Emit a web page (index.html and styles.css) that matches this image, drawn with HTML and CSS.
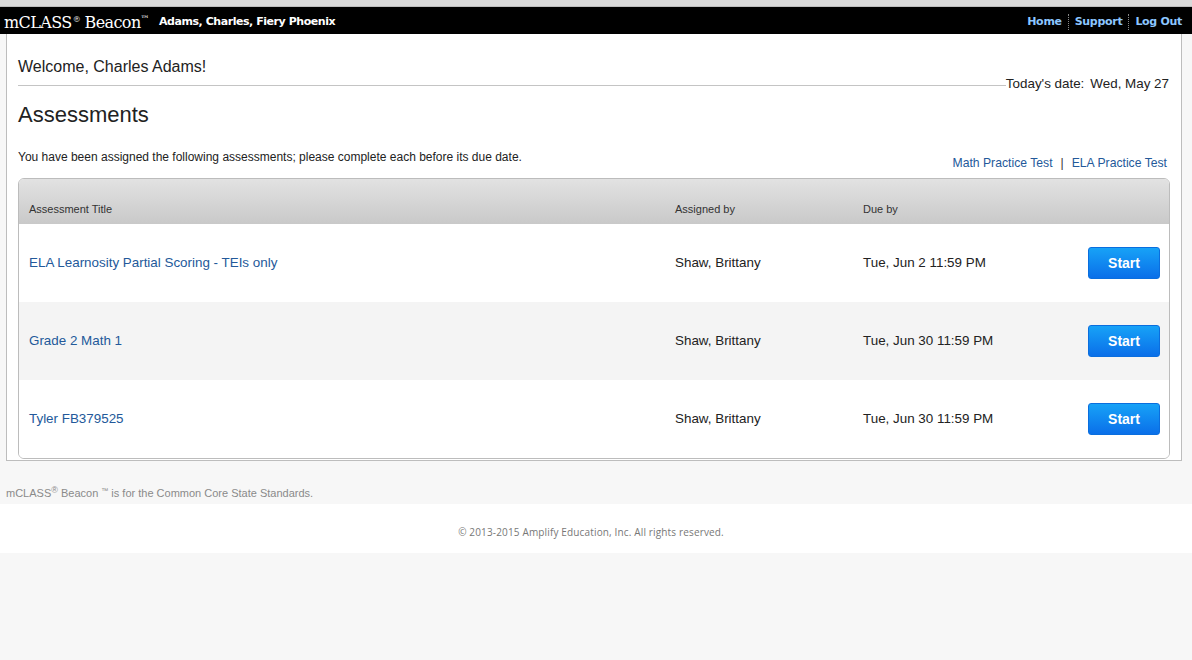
FILE: index.html
```html
<!DOCTYPE html>
<html>
<head>
<meta charset="utf-8">
<link rel="stylesheet" href="styles.css">
</head>
<body>
<div class="chrome"></div>
<header class="topbar">
  <div class="brand">
    <span class="logo">mCLASS<sup>®</sup> Beacon<sup class="tm">™</sup></span>
    <span class="user">Adams, Charles, Fiery Phoenix</span>
  </div>
  <nav class="toplinks">
    <a href="#">Home</a><span class="sep"></span><a href="#">Support</a><span class="sep"></span><a href="#">Log Out</a>
  </nav>
</header>
<main class="panel">
  <div class="welcome">Welcome, Charles Adams!</div>
  <div class="daterow">
    <div class="rule"></div>
    <div class="today"><span>Today's date:</span><span>Wed, May 27</span></div>
  </div>
  <h1 class="title">Assessments</h1>
  <div class="introrow">
    <p class="intro">You have been assigned the following assessments; please complete each before its due date.</p>
    <div class="practice"><a href="#">Math Practice Test</a><span class="bar">|</span><a href="#">ELA Practice Test</a></div>
  </div>
  <div class="table">
    <div class="thead row">
      <div class="c-title">Assessment Title</div>
      <div class="c-by">Assigned by</div>
      <div class="c-due">Due by</div>
      <div class="c-act"></div>
    </div>
    <div class="row body">
      <div class="c-title"><a href="#">ELA Learnosity Partial Scoring - TEIs only</a></div>
      <div class="c-by">Shaw, Brittany</div>
      <div class="c-due">Tue, Jun 2 11:59 PM</div>
      <div class="c-act"><button class="start">Start</button></div>
    </div>
    <div class="row body alt">
      <div class="c-title"><a href="#">Grade 2 Math 1</a></div>
      <div class="c-by">Shaw, Brittany</div>
      <div class="c-due">Tue, Jun 30 11:59 PM</div>
      <div class="c-act"><button class="start">Start</button></div>
    </div>
    <div class="row body">
      <div class="c-title"><a href="#">Tyler FB379525</a></div>
      <div class="c-by">Shaw, Brittany</div>
      <div class="c-due">Tue, Jun 30 11:59 PM</div>
      <div class="c-act"><button class="start">Start</button></div>
    </div>
  </div>
</main>
<div class="note">mCLASS<sup>®</sup> Beacon <sup class="tm2">™</sup> is for the Common Core State Standards.</div>
<footer class="copy">© 2013-2015 Amplify Education, Inc. All rights reserved.</footer>
</body>
</html>
```
FILE: styles.css
```css
html, body {
  margin: 0;
  padding: 0;
  background: #f7f7f7;
  font-family: "Liberation Sans", Arial, sans-serif;
  color: #222;
}
a { text-decoration: none; }

.chrome {
  height: 6px;
  background: #d9d9d9;
  border-bottom: 1px solid #bcbcbc;
}

.topbar {
  height: 27px;
  background: #000;
  display: flex;
  align-items: center;
  justify-content: space-between;
  padding: 0 10px 0 4px;
}
.brand { display: flex; align-items: center; }
.logo {
  font-family: "DejaVu Serif", "Liberation Serif", serif;
  color: #fff;
  font-size: 16px;
  letter-spacing: -0.6px;
  line-height: 27px;
}
.logo sup { font-size: 8px; vertical-align: 6px; margin-left: 1px; }
.logo sup.tm { font-size: 9px; vertical-align: 6px; margin-left: 0; }
.user {
  color: #fff;
  font-family: "DejaVu Sans", Verdana, sans-serif;
  font-weight: bold;
  font-size: 11px;
  letter-spacing: -0.45px;
  margin-left: 10px;
  margin-top: 2px;
}
.toplinks {
  display: flex;
  align-items: center;
  margin-top: 2px;
}
.toplinks a {
  color: #8cc6ff;
  font-family: "DejaVu Sans", Verdana, sans-serif;
  font-weight: bold;
  font-size: 11px;
  letter-spacing: -0.3px;
}
.toplinks .sep {
  width: 0;
  height: 16px;
  border-left: 1px dotted #888;
  margin: 0 6px;
}

.panel {
  margin-left: 6px;
  width: 1176px;
  background: #fff;
  border: 1px solid #bdbdbd;
  border-top: none;
  padding: 0 11px 0 11px;
  box-sizing: border-box;
  height: 427px;
}
.welcome {
  font-size: 16px;
  color: #222;
  padding-top: 23px;
  line-height: 20px;
}
.daterow {
  display: flex;
  align-items: flex-start;
  margin-top: 8px;
  height: 2px;
}
.rule {
  flex: 1;
  border-top: 1px solid #c4c4c4;
}
.today {
  display: flex;
  gap: 6px;
  font-size: 13.4px;
  line-height: 16px;
  margin-top: -9px;
  color: #222;
  margin-right: 1px;
}
.title {
  font-weight: normal;
  font-size: 22px;
  margin: 14px 0 0 0;
  line-height: 28px;
  color: #222;
}
.introrow {
  display: flex;
  justify-content: space-between;
  align-items: flex-start;
  margin-top: 21px;
}
.intro {
  margin: 0;
  font-size: 12px;
  line-height: 14px;
  color: #222;
}
.practice {
  font-size: 12.2px;
  line-height: 14px;
  margin-top: 6px;
  margin-right: 3px;
}
.practice a { color: #24599a; }
.practice .bar { color: #333; margin: 0 8px; }

.table {
  margin-top: 8px;
  width: 1152px;
  box-sizing: border-box;
  border: 1px solid #bcbcbc;
  border-radius: 6px;
  overflow: hidden;
}
.row {
  display: grid;
  grid-template-columns: 646px 188px 1fr 94px;
  align-items: center;
  padding-left: 10px;
}
.thead {
  height: 45px;
  background: linear-gradient(#e2e2e2, #c9c9c9);
  align-items: end;
  font-size: 11px;
  color: #333;
}
.thead > div { padding-bottom: 9px; }
.body {
  height: 78px;
  background: #fff;
  font-size: 13.4px;
  color: #222;
  padding-bottom: 1px;
  box-sizing: border-box;
}
.body.alt { background: #f4f4f4; }
.c-title a { color: #23599a; }
.c-act {
  display: flex;
  justify-content: flex-end;
  padding-right: 9px;
}
.start {
  width: 72px;
  height: 32px;
  border: 1px solid #0a6ede;
  border-radius: 3px;
  background: linear-gradient(#17a2f7, #0a6fe9);
  color: #fff;
  font-family: "Liberation Sans", Arial, sans-serif;
  font-weight: bold;
  font-size: 14px;
  padding: 0;
}

.note {
  font-size: 11px;
  color: #8a8a8a;
  padding: 22px 0 0 6px;
  height: 21px;
  line-height: 14px;
}
.note sup { font-size: 9px; vertical-align: 4px; }
.note sup.tm2 { font-size: 7px; }
.copy {
  background: #fff;
  height: 49px;
  display: flex;
  align-items: center;
  justify-content: center;
  font-family: "Open Sans", "DejaVu Sans", sans-serif;
  font-size: 10px;
  letter-spacing: 0.15px;
  color: #777;
  padding-top: 6px;
  box-sizing: border-box;
  padding-right: 10px;
}
```
